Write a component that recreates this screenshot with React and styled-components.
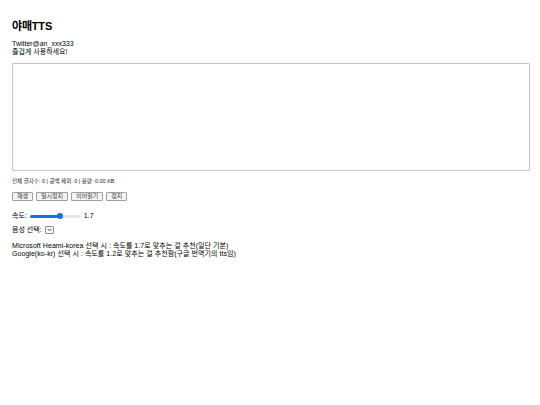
import React, { useState } from "react";
import styled, { createGlobalStyle } from "styled-components";

const GlobalStyle = createGlobalStyle`
	body {
		margin: 0;
		background: #fff;
		font-family: "Liberation Sans", Arial, "Noto Sans CJK KR", sans-serif;
		color: #000;
	}
`;

const App = () => {
	const [text, setText] = useState("");
	const [rate, setRate] = useState(1.7);

	return (
		<Wrapper>
			<GlobalStyle />
			<h1 className="title">야매TTS</h1>
			<p className="credit">
				Twitter@an_xxx333
				<br />
				즐겁게 사용하세요!
			</p>
			<TextBox value={text} onChange={(e) => setText(e.target.value)} />
			<p className="stats">전체 글자수: 0 | 공백 제외: 0 | 용량: 0.00 KB</p>
			<ButtonRow>
				<Btn>재생</Btn>
				<Btn>일시정지</Btn>
				<Btn>이어읽기</Btn>
				<Btn>정지</Btn>
			</ButtonRow>
			<Row>
				<span>속도:</span>
				<Slider
					type="range"
					min="0.5"
					max="2.5"
					step="0.1"
					value={rate}
					onChange={(e) => setRate(e.target.value)}
					style={{ "--fill": `${((rate - 0.5) / 2) * 100}%` }}
				/>
				<span>{Number(rate).toFixed(1)}</span>
			</Row>
			<Row className="voice">
				<span>음성 선택:</span>
				<Select>
					<svg width="5" height="4" viewBox="0 0 5 4">
						<path d="M0.6 0.9 L2.5 2.8 L4.4 0.9" fill="none" stroke="#222" strokeWidth="0.9" />
					</svg>
				</Select>
			</Row>
			<p className="notes">
				Microsoft Heami-korea 선택 시 : 속도를 1.7로 맞추는 걸 추천(일단 기본)
				<br />
				Google(ko-kr) 선택 시 : 속도를 1.2로 맞추는 걸 추천함(구글 번역기의 tts임)
			</p>
		</Wrapper>
	);
};

export default App;

const Wrapper = styled.div`
	padding: 0 10px 0 12px;
	font-size: 7px;
	line-height: 8px;

	.title {
		font-size: 11px;
		font-weight: bold;
		margin: 0;
		padding-top: 20px;
		line-height: 12px;
		letter-spacing: -0.2px;
	}
	.credit {
		margin: 8px 0 7px;
	}
	.stats {
		font-size: 5.5px;
		margin: 6px 0 7px;
		color: #222;
	}
	.notes {
		margin: 7px 0 0;
		letter-spacing: 0.05px;
	}
`;

const TextBox = styled.textarea`
	display: block;
	box-sizing: border-box;
	width: 100%;
	height: 108px;
	border: 1px solid #c4c4c4;
	border-radius: 1px;
	resize: none;
	outline: none;
	margin: 0;
`;

const ButtonRow = styled.div`
	display: flex;
	gap: 3px;
	margin-bottom: 10px;
`;

const Btn = styled.button`
	font-family: inherit;
	font-size: 6px;
	line-height: 7px;
	padding: 0 4px;
	background: #f4f4f4;
	border: 1px solid #a0a0a0;
	border-radius: 1px;
	color: #333;
`;

const Row = styled.div`
	display: flex;
	align-items: center;
	gap: 3px;
	height: 10px;
	margin-bottom: 4px;

	&.voice {
		margin-bottom: 0;
	}
`;

const Slider = styled.input`
	-webkit-appearance: none;
	appearance: none;
	width: 51px;
	height: 3px;
	margin: 0;
	border-radius: 2px;
	background: linear-gradient(to right, #1a6fe0 var(--fill), #e6e6e6 var(--fill));

	&::-webkit-slider-thumb {
		-webkit-appearance: none;
		width: 6px;
		height: 6px;
		border-radius: 50%;
		background: #1a6fe0;
		border: none;
	}
`;

const Select = styled.div`
	display: flex;
	align-items: center;
	justify-content: center;
	width: 7px;
	height: 6px;
	border: 1px solid #8f8f8f;
	border-radius: 1px;
	background: #fff;
`;
